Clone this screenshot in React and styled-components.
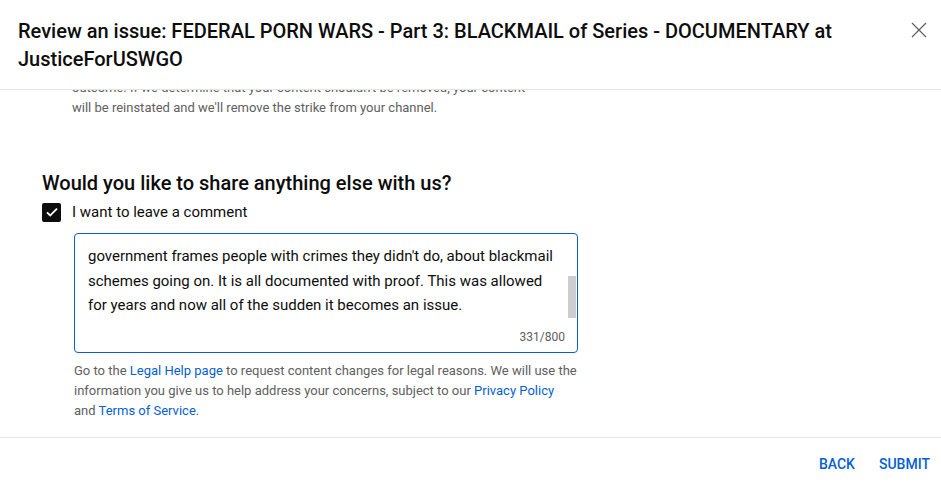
import styled, { createGlobalStyle } from "styled-components";

const GlobalStyle = createGlobalStyle`
  html, body {
    margin: 0;
    padding: 0;
    background: #fff;
  }
  body {
    font-family: Roboto, "Noto Sans", Arial, sans-serif;
    color: #0d0d0d;
  }
`;

const outcome = [
  "We'll review your appeal and send you an email with the",
  "outcome. If we determine that your content shouldn't be removed, your content",
  "will be reinstated and we'll remove the strike from your channel.",
];

const comment = [
  "government frames people with crimes they didn't do, about blackmail",
  "schemes going on. It is all documented with proof. This was allowed",
  "for years and now all of the sudden it becomes an issue.",
];

function CloseIcon() {
  return (
    <svg width="16" height="16" viewBox="0 0 16 16">
      <path d="M1 1L15 15M15 1L1 15" stroke="#606060" strokeWidth="1.2" fill="none" />
    </svg>
  );
}

function CheckIcon() {
  return (
    <svg width="16" height="16" viewBox="0 0 24 24">
      <path d="M4.5 12.5l4.8 4.8L19.5 7" stroke="#fff" strokeWidth="2.8" fill="none" />
    </svg>
  );
}

export default function App() {
  return (
    <Dialog>
      <GlobalStyle />
      <Header>
        <Title>
          Review an issue: FEDERAL PORN WARS - Part 3: BLACKMAIL of Series - DOCUMENTARY at JusticeForUSWGO
        </Title>
        <CloseButton aria-label="Close">
          <CloseIcon />
        </CloseButton>
      </Header>

      <Body>
        <Outcome>
          {outcome.map((line) => (
            <Line key={line}>{line}</Line>
          ))}
        </Outcome>

        <Question>Would you like to share anything else with us?</Question>

        <CheckRow>
          <CheckBox>
            <CheckIcon />
          </CheckBox>
          <span>I want to leave a comment</span>
        </CheckRow>

        <CommentBox>
          <CommentText>
            {comment.map((line) => (
              <Line key={line}>{line}</Line>
            ))}
          </CommentText>
          <ScrollThumb />
          <Counter>331/800</Counter>
        </CommentBox>

        <Legal>
          <Line>
            Go to the <Link>Legal Help page</Link> to request content changes for legal reasons. We will use the
          </Line>
          <Line>
            information you give us to help address your concerns, subject to our <Link>Privacy Policy</Link>
          </Line>
          <Line>
            and <Link>Terms of Service</Link>.
          </Line>
        </Legal>
      </Body>

      <Footer>
        <TextButton>BACK</TextButton>
        <TextButton>SUBMIT</TextButton>
      </Footer>
    </Dialog>
  );
}

const Dialog = styled.div`
  width: 941px;
  height: 484px;
  display: flex;
  flex-direction: column;
  background: #fff;
  overflow: hidden;
`;

const Header = styled.div`
  display: flex;
  align-items: flex-start;
  justify-content: space-between;
  padding: 17px 14px 16px 18px;
  border-bottom: 1px solid #e5e5e5;
  flex-shrink: 0;
`;

const Title = styled.h1`
  margin: 0;
  max-width: 840px;
  font-size: 20px;
  font-weight: 500;
  line-height: 28px;
  color: #0d0d0d;
`;

const CloseButton = styled.button`
  border: none;
  background: none;
  padding: 0;
  margin-top: 5px;
  cursor: pointer;
  display: flex;
`;

const Body = styled.div`
  flex: 1;
  overflow: hidden;
  padding: 0 0 0 42px;
`;

const Line = styled.div`
  white-space: nowrap;
`;

const Outcome = styled.div`
  margin: -32px 0 0 30px;
  font-size: 13px;
  line-height: 20px;
  color: #606060;
`;

const Question = styled.h2`
  margin: 51px 0 0;
  font-size: 20px;
  font-weight: 500;
  line-height: 28px;
  color: #0d0d0d;
`;

const CheckRow = styled.label`
  display: flex;
  align-items: center;
  gap: 11px;
  margin-top: 3px;
  height: 24px;
  font-size: 15px;
  color: #0d0d0d;
`;

const CheckBox = styled.span`
  width: 19px;
  height: 19px;
  border-radius: 2px;
  background: #0d0d0d;
  display: flex;
  align-items: center;
  justify-content: center;
`;

const CommentBox = styled.div`
  position: relative;
  margin: 9px 0 0 32px;
  width: 502px;
  height: 118px;
  border: 1px solid #065fd4;
  border-radius: 4px;
  overflow: hidden;
`;

const CommentText = styled.div`
  padding: 10px 13px 0;
  font-size: 15px;
  line-height: 24.5px;
  color: #0d0d0d;
`;

const ScrollThumb = styled.div`
  position: absolute;
  right: 1px;
  top: 42px;
  width: 8px;
  height: 42px;
  background: #cdcdcd;
`;

const Counter = styled.div`
  position: absolute;
  right: 12px;
  bottom: 8px;
  font-size: 12px;
  color: #606060;
`;

const Legal = styled.div`
  margin: 8px 0 0 32px;
  font-size: 13px;
  line-height: 20px;
  color: #606060;
`;

const Link = styled.a`
  color: #065fd4;
  text-decoration: none;
  cursor: pointer;
`;

const Footer = styled.div`
  display: flex;
  justify-content: flex-end;
  align-items: center;
  gap: 24px;
  height: 46px;
  padding: 0 11px 0 0;
  border-top: 1px solid #e5e5e5;
  flex-shrink: 0;
`;

const TextButton = styled.button`
  border: none;
  background: none;
  padding: 0;
  margin-top: 6px;
  font-family: Roboto, Arial, sans-serif;
  font-size: 14px;
  font-weight: 500;
  color: #065fd4;
  cursor: pointer;
`;
